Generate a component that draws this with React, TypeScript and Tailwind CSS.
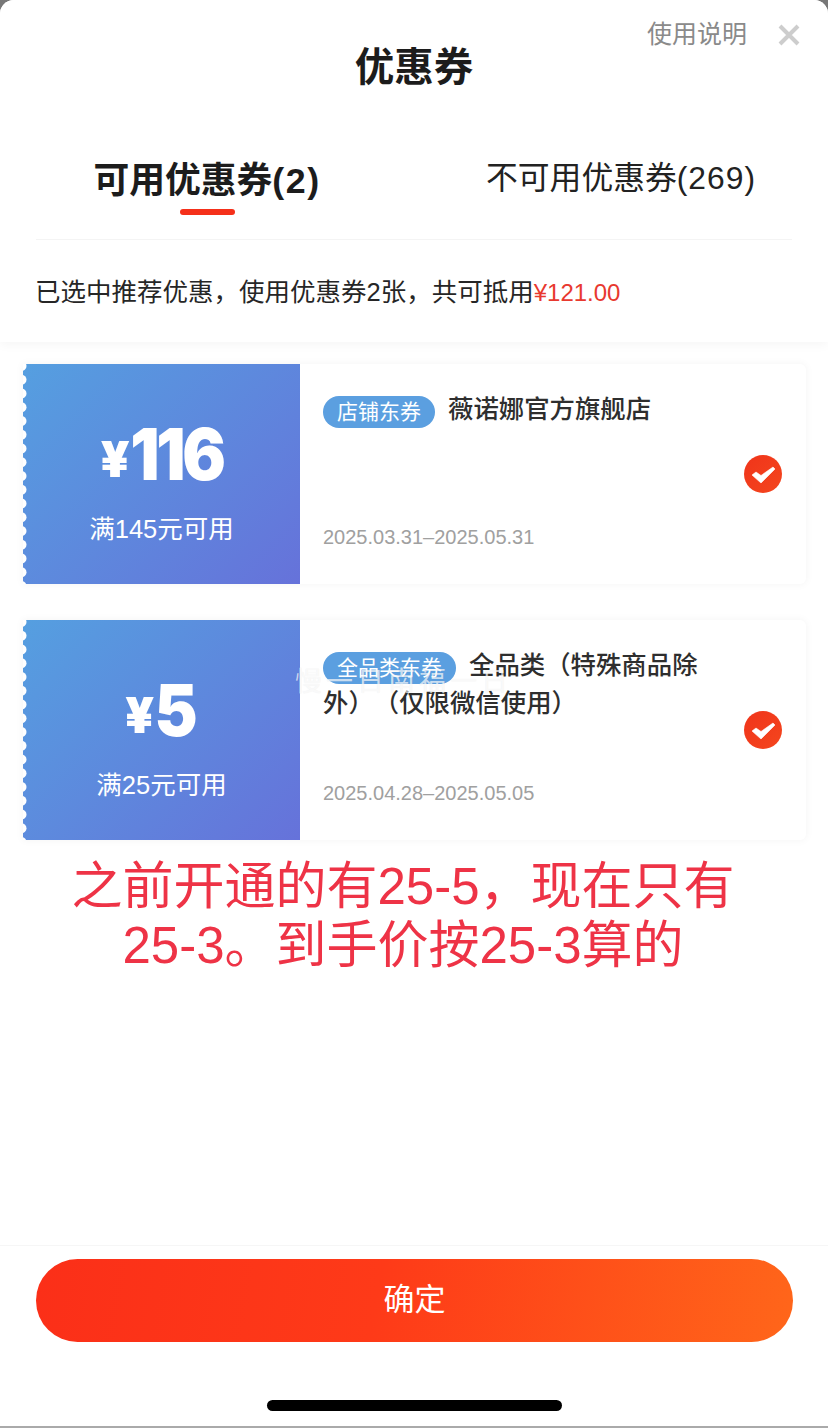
import React from "react";

const FONT = "font-['Liberation_Sans','Noto_Sans_CJK_SC',sans-serif]";

function Scallops() {
  const ys = Array.from({ length: 17 }, (_, i) => i * 13.75 + 2);
  return (
    <svg className="absolute left-0 top-0 h-[220px] w-[6px]" viewBox="0 0 6 220">
      {ys.map((y) => (
        <circle key={y} cx="-1.5" cy={y} r="5" fill="#ffffff" />
      ))}
    </svg>
  );
}

function Check() {
  return (
    <svg width="38" height="38" viewBox="0 0 38 38" className="shrink-0">
      <defs>
        <linearGradient id="chk" x1="0" y1="0" x2="1" y2="1">
          <stop offset="0" stopColor="#f0341a" />
          <stop offset="1" stopColor="#f4461e" />
        </linearGradient>
      </defs>
      <circle cx="19" cy="19" r="19" fill="url(#chk)" />
      <path d="M8 20 L12 17 L17 20.5 L29 12 L31 14 L17 28 Z" fill="#ffffff" stroke="#ffffff" strokeWidth="0.6" strokeLinejoin="round" />
    </svg>
  );
}

function Coupon({
  amount,
  amountClass,
  rule,
  badge,
  title,
  date,
}: {
  amount: string;
  amountClass: string;
  rule: string;
  badge: string;
  title: string;
  date: string;
}) {
  return (
    <div className="flex h-[220px] rounded-r-[6px] bg-white shadow-[0_0_8px_rgba(0,0,0,0.05)]">
      <div className="relative flex w-[277px] shrink-0 flex-col items-center bg-[linear-gradient(135deg,#559fe0,#6672da)] pt-[50px] text-white">
        <Scallops />
        <div className="flex h-[80px] items-center">
          <span className="mt-[10px] font-['Inter',sans-serif] text-[50px] font-black leading-none">¥</span>
          <span className={amountClass}>{amount}</span>
        </div>
        <div className="mt-[20px] text-[25.5px] leading-[30px]">{rule}</div>
      </div>
      <div className="flex min-w-0 flex-1 items-center pr-[24px]">
        <div className="flex h-full flex-1 flex-col pb-[35px] pl-[23px] pt-[26px]">
          <div className="w-[385px] text-[25.4px] font-medium leading-[38px] text-[#2e2e2e] [text-spacing-trim:space-all]">
            <span className="mr-[13px] inline-block h-[32px] rounded-full bg-[#5b9fe0] px-[14px] align-[-1px] text-[21px] font-normal leading-[32px] text-white">
              {badge}
            </span>
            {title}
          </div>
          <div className="mt-auto text-[20px] leading-[24px] text-[#a0a0a0]">{date}</div>
        </div>
        <Check />
      </div>
    </div>
  );
}

export default function App() {
  return (
    <div className={`${FONT} h-[1428px] w-[828px] overflow-hidden bg-[#777777]`}>
      <div className="relative flex h-[1428px] flex-col overflow-hidden rounded-t-[14px] border-b-2 border-[#aaaaaa] bg-white">
        <div className="h-[342px] shrink-0 bg-white shadow-[0_3px_10px_rgba(0,0,0,0.04)]">
          <div className="grid h-[133px] grid-cols-[1fr_auto_1fr]">
            <div />
            <div className="pt-[41px] text-[39.5px] font-bold leading-[52px] text-[#1c1c1c]">优惠券</div>
            <div className="flex items-start justify-end gap-[30px] pr-[27px] pt-[17px]">
              <span className="text-[25px] leading-[34px] text-[#8a8a8a]">使用说明</span>
              <svg width="24" height="24" viewBox="0 0 24 24" className="mt-[6px]">
                <path d="M3 3 L21 21 M21 3 L3 21" stroke="#cdcdcd" strokeWidth="4" fill="none" />
              </svg>
            </div>
          </div>
          <div className="flex h-[106px]">
            <div className="flex w-[414px] flex-col items-center">
              <div className="mt-[25px] text-[35.8px] font-bold leading-[46px] text-[#1c1c1c]">
                可用优惠券<span className="tracking-[1.5px]">(2)</span>
              </div>
              <div className="mt-[5px] h-[6px] w-[55px] rounded-full bg-[#f5301a]" />
            </div>
            <div className="flex w-[414px] flex-col items-center">
              <div className="mt-[22px] text-[31.8px] leading-[46px] text-[#222222]">
                不可用优惠券<span className="tracking-[1px]">(269)</span>
              </div>
            </div>
          </div>
          <div className="mx-[36px] border-t border-[#f4f4f4] pt-[35px] text-[25.5px] leading-[34px] text-[#262626]">
            <span className="-ml-[1px]">已选中推荐优惠，使用优惠券2张，共可抵用</span>
            <span className="text-[24px] text-[#e8392f]">¥121.00</span>
          </div>
        </div>

        <div className="flex flex-col gap-[36px] pl-[23px] pr-[22px] pt-[22px]">
          <Coupon
            amount="116"
            amountClass="-mx-[0.07em] inline-block scale-x-90 font-['Inter',sans-serif] text-[72px] font-black leading-none tracking-[-0.05em]"
            rule="满145元可用"
            badge="店铺东券"
            title="薇诺娜官方旗舰店"
            date="2025.03.31–2025.05.31"
          />
          <Coupon
            amount="5"
            amountClass="-mx-[0.03em] inline-block scale-x-90 font-['Inter',sans-serif] text-[72px] font-black leading-none"
            rule="满25元可用"
            badge="全品类东券"
            title="全品类（特殊商品除外）（仅限微信使用）"
            date="2025.04.28–2025.05.05"
          />
        </div>

        <div className="mt-[17px] w-[806px] text-center text-[51px] leading-[59px] text-[#ee3346]">
          之前开通的有25-5，现在只有
          <br />
          25-3。到手价按25-3算的
        </div>

        <div className="mt-auto h-[181px] shrink-0 border-t border-[#f6f6f6] px-[36px] pt-[13px]">
          <div className="flex h-[83px] w-[757px] items-center justify-center rounded-full bg-[linear-gradient(100deg,#fb2f18,#fe3a18_45%,#ff661a)] text-[31px] text-white">
            确定
          </div>
          <div className="mx-auto mt-[58px] h-[11px] w-[295px] rounded-full bg-black" />
        </div>

        <div className="absolute left-[295px] top-[665px] text-[27px] leading-[34px] tracking-[4px] text-white/70 [text-shadow:0_0_1px_rgba(0,0,0,0.08)]">
          慢一日南福一日
        </div>
      </div>
    </div>
  );
}
